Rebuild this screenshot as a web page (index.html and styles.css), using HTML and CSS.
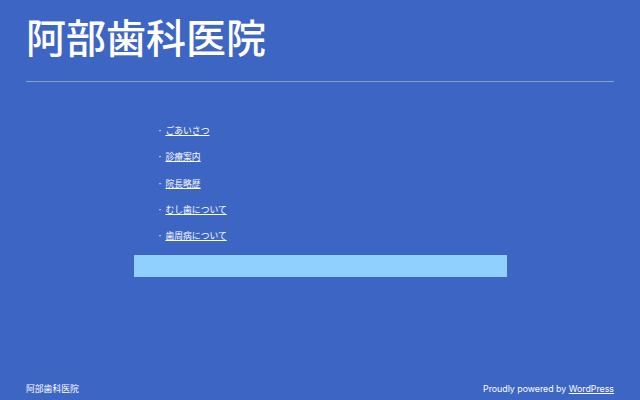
FILE: index.html
```html
<!DOCTYPE html>
<html lang="ja">
<head>
<meta charset="utf-8">
<title>阿部歯科医院</title>
<link rel="stylesheet" href="styles.css">
</head>
<body>
<div class="page">
  <header class="site-header">
    <h1 class="site-title">阿部歯科医院</h1>
  </header>
  <main class="content">
    <ul class="menu">
      <li><a href="#">ごあいさつ</a></li>
      <li><a href="#">診療案内</a></li>
      <li><a href="#">院長略歴</a></li>
      <li><a href="#">むし歯について</a></li>
      <li><a href="#">歯周病について</a></li>
    </ul>
    <div class="bar"></div>
  </main>
  <footer class="site-footer">
    <span class="footer-name">阿部歯科医院</span>
    <span class="powered">Proudly powered by <a href="#">WordPress</a></span>
  </footer>
</div>
</body>
</html>
```
FILE: styles.css
```css
html, body {
  margin: 0;
  padding: 0;
  height: 100%;
}
body {
  background: #3d65c4;
  color: #ffffff;
  font-family: "Noto Sans CJK JP", "Noto Sans", sans-serif;
}
.page {
  box-sizing: border-box;
  min-height: 100vh;
  padding: 0 26px;
  display: flex;
  flex-direction: column;
}
.site-header {
  border-bottom: 1px solid #8a9fc9;
  height: 82px;
  box-sizing: border-box;
}
.site-title {
  margin: 0;
  padding-top: 8px;
  font-size: 40px;
  line-height: 56px;
  font-weight: 500;
  letter-spacing: 0;
}
.content {
  width: 373px;
  margin: 0 auto;
  padding-top: 42px;
}
.menu {
  list-style: none;
  margin: 0;
  padding: 0 0 0 24px;
}
.menu li {
  font-size: 8.8px;
  line-height: 14px;
  margin-bottom: 12.3px;
}
.menu li::before {
  content: "·";
  margin-right: 3px;
}
.menu a {
  color: #ffffff;
  text-decoration: underline;
}
.bar {
  height: 22px;
  background: #8fd0ff;
  margin-top: 8px;
}
.site-footer {
  margin-top: auto;
  display: flex;
  justify-content: space-between;
  align-items: baseline;
  font-size: 8.8px;
  line-height: 14px;
  padding-bottom: 4px;
}
.powered {
  font-family: "Inter", "Lato", sans-serif;
  font-size: 8.8px;
}
.powered a {
  color: #ffffff;
  text-decoration: underline;
}
```
